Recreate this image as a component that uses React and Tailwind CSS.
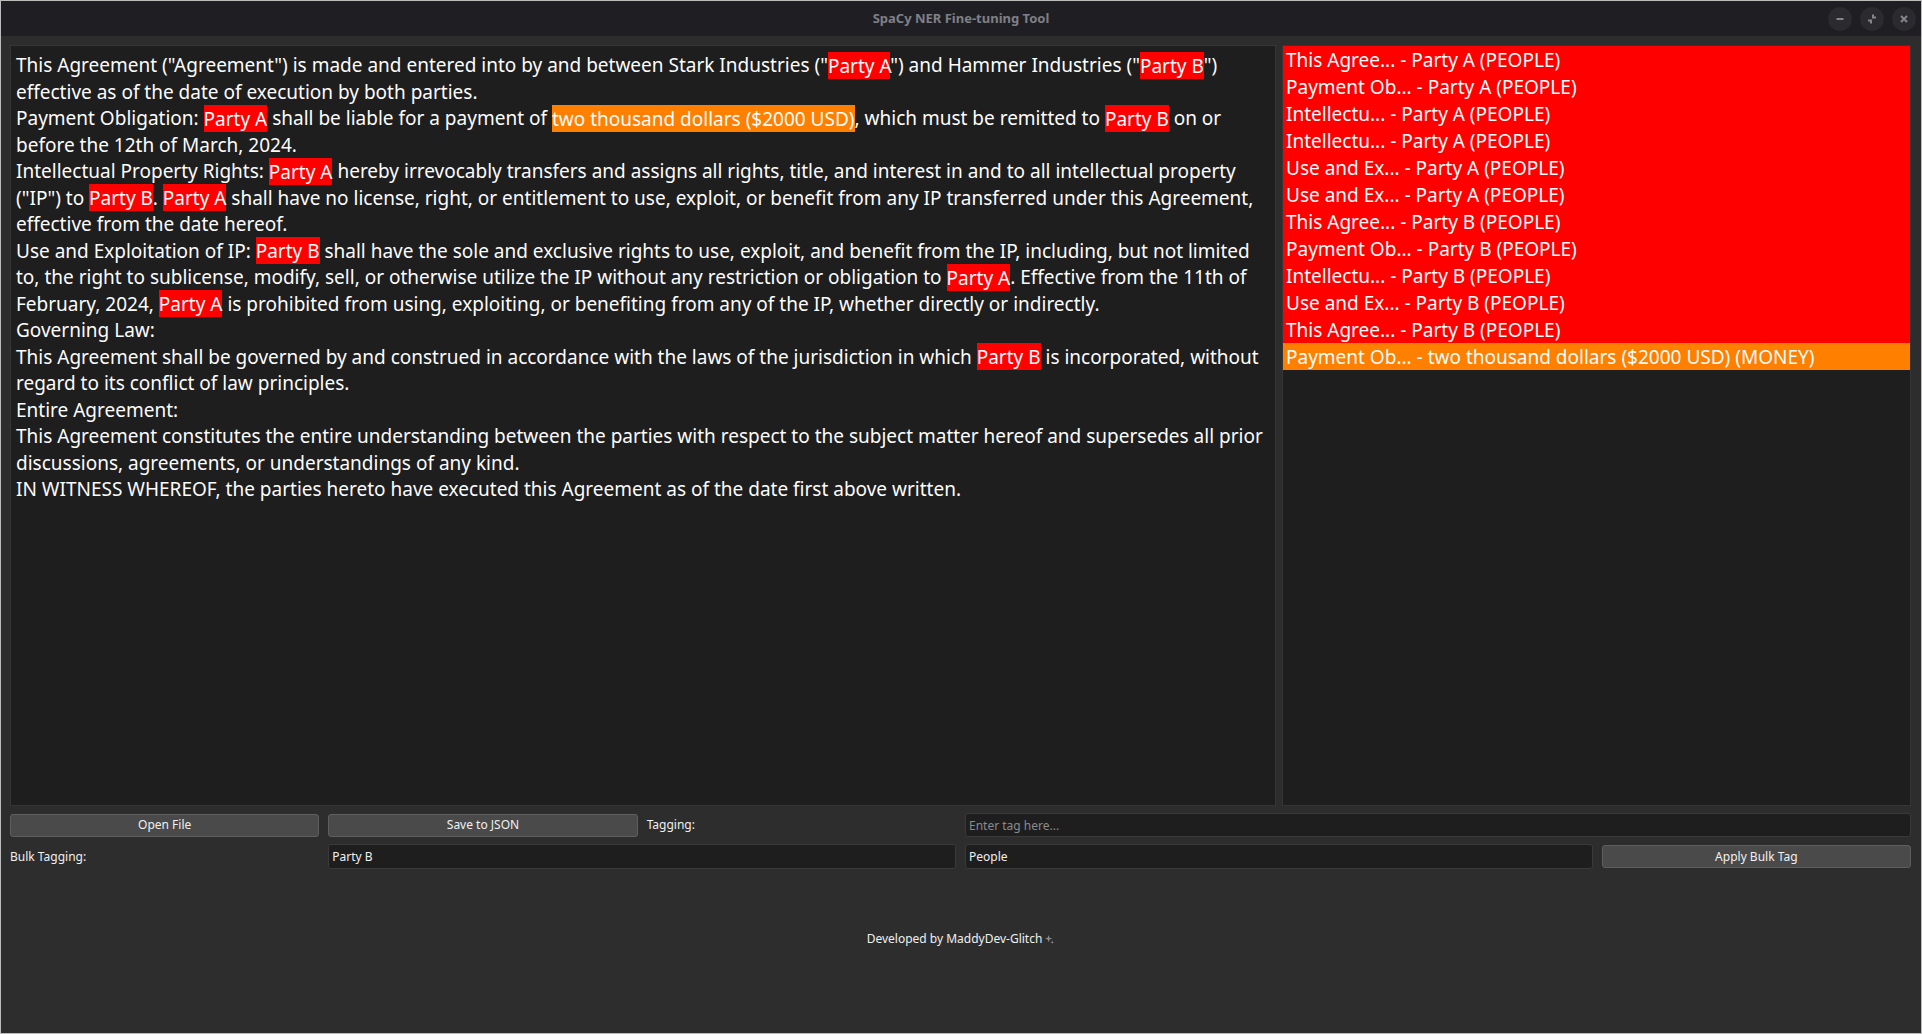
import React, { useState } from 'react';

const lines = [
  ['This Agreement ("Agreement") is made and entered into by and between Stark Industries ("', { t: 'Party A' }, '") and Hammer Industries ("', { t: 'Party B' }, '")'],
  ['effective as of the date of execution by both parties.'],
  ['Payment Obligation: ', { t: 'Party A' }, ' shall be liable for a payment of ', { t: 'two thousand dollars ($2000 USD)', money: true }, ', which must be remitted to ', { t: 'Party B' }, ' on or'],
  ['before the 12th of March, 2024.'],
  ['Intellectual Property Rights: ', { t: 'Party A' }, ' hereby irrevocably transfers and assigns all rights, title, and interest in and to all intellectual property'],
  ['("IP") to ', { t: 'Party B' }, '. ', { t: 'Party A' }, ' shall have no license, right, or entitlement to use, exploit, or benefit from any IP transferred under this Agreement,'],
  ['effective from the date hereof.'],
  ['Use and Exploitation of IP: ', { t: 'Party B' }, ' shall have the sole and exclusive rights to use, exploit, and benefit from the IP, including, but not limited'],
  ['to, the right to sublicense, modify, sell, or otherwise utilize the IP without any restriction or obligation to ', { t: 'Party A' }, '. Effective from the 11th of'],
  ['February, 2024, ', { t: 'Party A' }, ' is prohibited from using, exploiting, or benefiting from any of the IP, whether directly or indirectly.'],
  ['Governing Law:'],
  ['This Agreement shall be governed by and construed in accordance with the laws of the jurisdiction in which ', { t: 'Party B' }, ' is incorporated, without'],
  ['regard to its conflict of law principles.'],
  ['Entire Agreement:'],
  ['This Agreement constitutes the entire understanding between the parties with respect to the subject matter hereof and supersedes all prior'],
  ['discussions, agreements, or understandings of any kind.'],
  ['IN WITNESS WHEREOF, the parties hereto have executed this Agreement as of the date first above written.'],
];

const entities = [
  { src: 'This Agree...', text: 'Party A', label: 'PEOPLE' },
  { src: 'Payment Ob...', text: 'Party A', label: 'PEOPLE' },
  { src: 'Intellectu...', text: 'Party A', label: 'PEOPLE' },
  { src: 'Intellectu...', text: 'Party A', label: 'PEOPLE' },
  { src: 'Use and Ex...', text: 'Party A', label: 'PEOPLE' },
  { src: 'Use and Ex...', text: 'Party A', label: 'PEOPLE' },
  { src: 'This Agree...', text: 'Party B', label: 'PEOPLE' },
  { src: 'Payment Ob...', text: 'Party B', label: 'PEOPLE' },
  { src: 'Intellectu...', text: 'Party B', label: 'PEOPLE' },
  { src: 'Use and Ex...', text: 'Party B', label: 'PEOPLE' },
  { src: 'This Agree...', text: 'Party B', label: 'PEOPLE' },
  { src: 'Payment Ob...', text: 'two thousand dollars ($2000 USD)', label: 'MONEY' },
];

function TitleButton({ children }) {
  return (
    <div className="w-6 h-6 rounded-full bg-[#2a2a2f] flex items-center justify-center">
      <svg width="12" height="12" viewBox="0 0 12 12" fill="none" stroke="#85858c" strokeWidth="2">
        {children}
      </svg>
    </div>
  );
}

function App() {
  const [tag, setTag] = useState('');
  const [bulkText, setBulkText] = useState('Party B');
  const [bulkTag, setBulkTag] = useState('People');

  return (
    <div className="h-screen w-screen flex flex-col bg-[#2d2d2d] border border-[#bcbcbc] font-['Noto_Sans',sans-serif] overflow-hidden">
      {/* title bar */}
      <div className="h-[35px] shrink-0 bg-[#1f1f23] relative flex items-center justify-center">
        <span className="text-[13px] font-bold text-[#7f7f87]">SpaCy NER Fine-tuning Tool</span>
        <div className="absolute right-[5px] top-[6px] flex gap-2">
          <TitleButton>
            <path d="M2.5 6h7" />
          </TitleButton>
          <TitleButton>
            <path d="M2 7.5h3v3M10 4.5h-3v-3" />
          </TitleButton>
          <TitleButton>
            <path d="M3 3l6 6M9 3l-6 6" />
          </TitleButton>
        </div>
      </div>

      <div className="flex-1 flex flex-col pl-[9px] pr-[10px] pt-[9px]">
        {/* editor + entity list */}
        <div className="h-[761px] flex gap-[6px]">
          <div className="flex-1 bg-[#1e1e1e] border border-[#363636] pl-[5px] pt-[6px] text-[19px] leading-[26.5px] text-[#fcfcfc] whitespace-nowrap overflow-hidden">
            {lines.map((parts, i) => (
              <div key={i}>
                {parts.map((p, j) =>
                  typeof p === 'string' ? (
                    <span key={j}>{p}</span>
                  ) : (
                    <span key={j} className={`py-[0.5px] ${p.money ? 'bg-[#ff8000]' : 'bg-[#ff0000]'}`}>
                      {p.t}
                    </span>
                  )
                )}
              </div>
            ))}
          </div>
          <div className="w-[629px] bg-[#1e1e1e] border border-[#363636] overflow-hidden">
            {entities.map((e, i) => (
              <div
                key={i}
                className={`h-[27px] pl-[3px] pt-[2px] text-[19px] leading-[25px] text-[#fcfcfc] whitespace-nowrap ${
                  e.label === 'MONEY' ? 'bg-[#ff8000]' : 'bg-[#ff0000]'
                }`}
              >
                {e.src} - {e.text} ({e.label})
              </div>
            ))}
          </div>
        </div>

        {/* controls */}
        <div className="mt-[7px] grid grid-cols-6 gap-x-[9px] gap-y-[7px] items-center text-[12px] text-[#f0f0f0]">
          <button className="h-[23px] rounded-[3px] border border-[#5e5e5e] bg-[#4a4a4a]">Open File</button>
          <button className="h-[23px] rounded-[3px] border border-[#5e5e5e] bg-[#4a4a4a]">Save to JSON</button>
          <div>Tagging:</div>
          <input
            value={tag}
            onChange={(e) => setTag(e.target.value)}
            placeholder="Enter tag here..."
            className="col-span-3 h-[24px] rounded-[3px] border border-[#3a3a3a] bg-[#1e1e1e] px-[3px] outline-none placeholder:text-[#8a8a8a]"
          />

          <div>Bulk Tagging:</div>
          <input
            value={bulkText}
            onChange={(e) => setBulkText(e.target.value)}
            className="col-span-2 h-[25px] rounded-[3px] border border-[#3a3a3a] bg-[#1e1e1e] px-[3px] outline-none"
          />
          <input
            value={bulkTag}
            onChange={(e) => setBulkTag(e.target.value)}
            className="col-span-2 h-[25px] rounded-[3px] border border-[#3a3a3a] bg-[#1e1e1e] px-[3px] outline-none"
          />
          <button className="h-[23px] rounded-[3px] border border-[#5e5e5e] bg-[#4a4a4a]">Apply Bulk Tag</button>
        </div>

        {/* footer */}
        <div className="mt-[62px] flex items-center justify-center gap-[3px] text-[12px] leading-[16px] text-[#f0f0f0]">
          <span>Developed by MaddyDev-Glitch</span>
          <svg width="9" height="9" viewBox="0 0 10 10" fill="#8a8a8a">
            <path d="M4 0l1 3 3 1-3 1-1 3-1-3-3-1 3-1z" />
            <path d="M8 6l.5 1.5L10 8l-1.5.5L8 10l-.5-1.5L6 8l1.5-.5z" />
          </svg>
        </div>
      </div>
    </div>
  );
}

export default App;
